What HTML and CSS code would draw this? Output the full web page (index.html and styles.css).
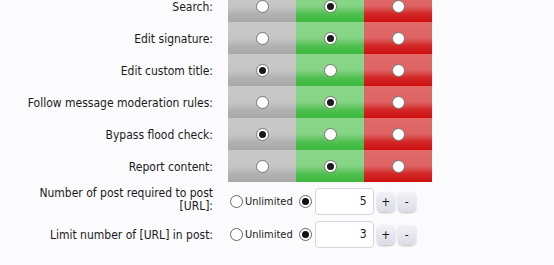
FILE: index.html
```html
<!DOCTYPE html>
<html lang="en">

<head>
    <meta charset="utf-8">
    <title>Permissions</title>
    <link rel="stylesheet" href="styles.css">
</head>

<body>
    <div class="perm-form">
        <div class="perm-grid">
            <div class="perm-label">Search:</div>
            <div class="cell no"><span class="radio"></span></div>
            <div class="cell yes"><span class="radio checked"></span></div>
            <div class="cell never"><span class="radio"></span></div>

            <div class="perm-label">Edit signature:</div>
            <div class="cell no"><span class="radio"></span></div>
            <div class="cell yes"><span class="radio checked"></span></div>
            <div class="cell never"><span class="radio"></span></div>

            <div class="perm-label">Edit custom title:</div>
            <div class="cell no"><span class="radio checked"></span></div>
            <div class="cell yes"><span class="radio"></span></div>
            <div class="cell never"><span class="radio"></span></div>

            <div class="perm-label">Follow message moderation rules:</div>
            <div class="cell no"><span class="radio"></span></div>
            <div class="cell yes"><span class="radio checked"></span></div>
            <div class="cell never"><span class="radio"></span></div>

            <div class="perm-label">Bypass flood check:</div>
            <div class="cell no"><span class="radio checked"></span></div>
            <div class="cell yes"><span class="radio"></span></div>
            <div class="cell never"><span class="radio"></span></div>

            <div class="perm-label">Report content:</div>
            <div class="cell no"><span class="radio"></span></div>
            <div class="cell yes"><span class="radio checked"></span></div>
            <div class="cell never"><span class="radio"></span></div>
        </div>

        <div class="int-row">
            <div class="int-label">Number of post required to post [URL]:</div>
            <div class="int-controls">
                <span class="plain-radio"></span>
                <span class="unlimited">Unlimited</span>
                <span class="plain-radio checked"></span>
                <span class="num-box">5</span>
                <span class="spin">+</span>
                <span class="spin">-</span>
            </div>
        </div>

        <div class="int-row">
            <div class="int-label single">Limit number of [URL] in post:</div>
            <div class="int-controls">
                <span class="plain-radio"></span>
                <span class="unlimited">Unlimited</span>
                <span class="plain-radio checked"></span>
                <span class="num-box">3</span>
                <span class="spin">+</span>
                <span class="spin">-</span>
            </div>
        </div>
    </div>
</body>
</html>
```

FILE: styles.css
```css
body {
    margin: 0;
    background-color: #fbfbfd;
    font-family: "DejaVu Sans Condensed", "DejaVu Sans", Tahoma, sans-serif;
    font-size: 12px;
    color: #1a1a1a;
}

.perm-form {
    margin-top: -10px;
}

.perm-grid {
    display: grid;
    grid-template-columns: 228px 68px 68px 68px;
    grid-auto-rows: 32px;
}

.perm-label {
    padding-right: 15px;
    padding-top: 1px;
    text-align: right;
    display: flex;
    align-items: center;
    justify-content: flex-end;
}

.cell {
    display: flex;
    align-items: center;
    justify-content: center;
}

.cell.no {
    background: linear-gradient(to bottom, #c8c8c8 0%, #c6c6c6 50%, #b2b2b2 75%, #a8a8a8 100%);
}

.cell.yes {
    background: linear-gradient(to bottom, #8ad68a 0%, #86d486 50%, #50c050 75%, #3cb83c 100%);
}

.cell.never {
    background: linear-gradient(to bottom, #e26a6a 0%, #de6464 50%, #d42626 75%, #cc1010 100%);
}

.radio {
    width: 11px;
    height: 11px;
    border-radius: 50%;
    border: 1px solid #777;
    background: #fff;
    box-sizing: content-box;
    position: relative;
}

.radio.checked::after {
    content: "";
    position: absolute;
    left: 2px;
    top: 2px;
    width: 7px;
    height: 7px;
    border-radius: 50%;
    background: #1a1a1a;
}

.int-row {
    display: grid;
    grid-template-columns: 228px auto;
    margin-top: 5px;
}

.int-label {
    padding-right: 15px;
    padding-left: 25px;
    text-align: right;
    line-height: 13px;
}

.int-label.single {
    padding-top: 9px;
}

.int-controls {
    display: flex;
    align-items: center;
    align-self: start;
    padding-top: 1px;
    padding-left: 2px;
}

.plain-radio {
    width: 11px;
    height: 11px;
    border-radius: 50%;
    border: 1px solid #666;
    background: #fff;
    position: relative;
}

.plain-radio.checked::after {
    content: "";
    position: absolute;
    left: 2px;
    top: 2px;
    width: 7px;
    height: 7px;
    border-radius: 50%;
    background: #111;
}

.unlimited {
    font-size: 11px;
    margin-left: 2px;
    margin-right: 6px;
}

.num-box {
    box-sizing: border-box;
    width: 59px;
    height: 27px;
    margin-left: 3px;
    padding-right: 6px;
    border: 1px solid #d4d4dc;
    border-radius: 4px;
    background: #fff;
    text-align: right;
    line-height: 25px;
}

.spin {
    width: 18px;
    height: 20px;
    margin-left: 3px;
    border-radius: 5px;
    background: linear-gradient(to bottom, #f2f2f8 0%, #dcdce6 100%);
    box-shadow: 0 1px 2px rgba(0, 0, 0, 0.25);
    text-align: center;
    line-height: 20px;
}
```
